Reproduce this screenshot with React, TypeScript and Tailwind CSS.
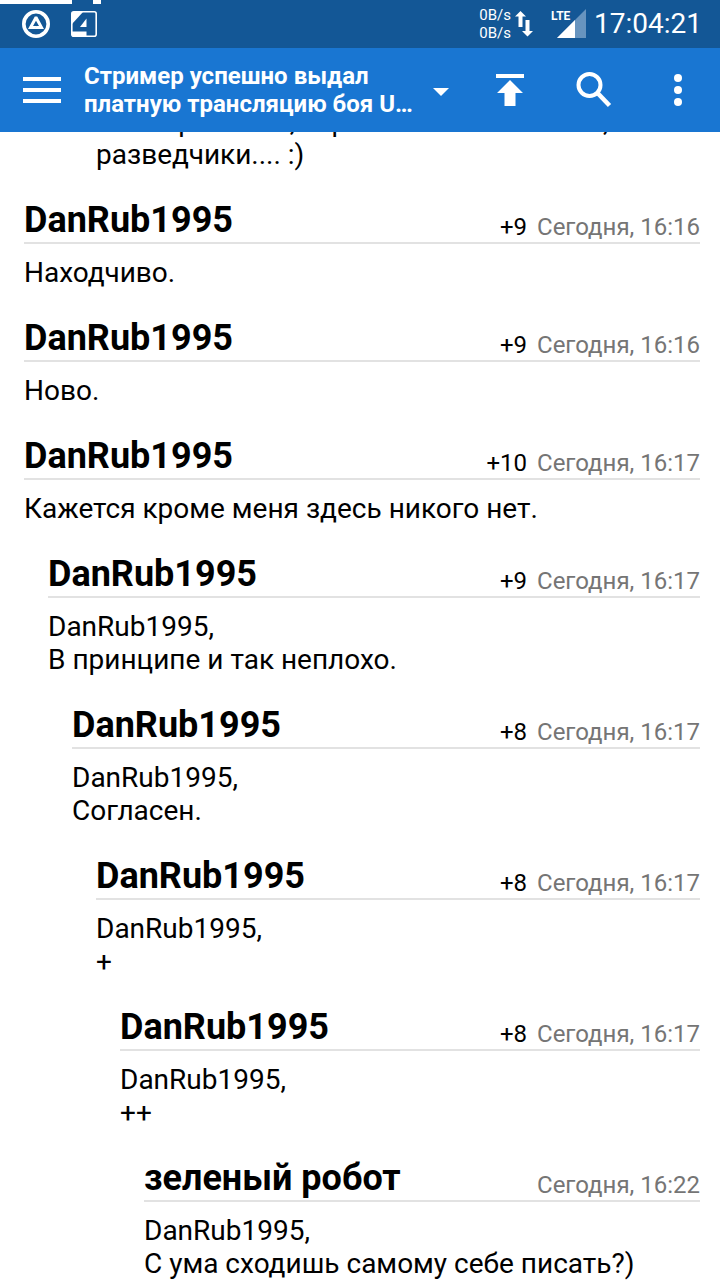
type Comment = {
  author: string;
  score?: string;
  time: string;
  lines: string[];
  indent: string;
};

const comments: Comment[] = [
  { author: "DanRub1995", score: "+9", time: "Сегодня, 16:16", lines: ["Находчиво."], indent: "ml-6" },
  { author: "DanRub1995", score: "+9", time: "Сегодня, 16:16", lines: ["Ново."], indent: "ml-6" },
  { author: "DanRub1995", score: "+10", time: "Сегодня, 16:17", lines: ["Кажется кроме меня здесь никого нет."], indent: "ml-6" },
  { author: "DanRub1995", score: "+9", time: "Сегодня, 16:17", lines: ["DanRub1995,", "В принципе и так неплохо."], indent: "ml-12" },
  { author: "DanRub1995", score: "+8", time: "Сегодня, 16:17", lines: ["DanRub1995,", "Согласен."], indent: "ml-18" },
  { author: "DanRub1995", score: "+8", time: "Сегодня, 16:17", lines: ["DanRub1995,", "+"], indent: "ml-24" },
  { author: "DanRub1995", score: "+8", time: "Сегодня, 16:17", lines: ["DanRub1995,", "++"], indent: "ml-30" },
  { author: "зеленый робот", time: "Сегодня, 16:22", lines: ["DanRub1995,", "С ума сходишь самому себе писать?)"], indent: "ml-36" },
];

function StatusBar() {
  return (
    <div className="relative flex h-12 items-center bg-[#135796] pl-[22px] pr-[18px] text-white">
      {/* edge of a heads-up notification sliding away */}
      <span className="absolute left-0 top-0 h-1 w-[72px] bg-white" />
      <span className="absolute left-[93px] top-0 h-1 w-2 bg-white" />

      <svg width="28" height="28" viewBox="0 0 28 28" fill="none" aria-hidden>
        <circle cx="14" cy="14" r="12.2" stroke="white" strokeWidth="3.6" />
        <path d="M12.8 6.500h2.400L22 19h-9.500l2.200-2.900h2.300L14 10.800l-3 5.300h3.600L12.500 19H6Z" fill="white" />
      </svg>
      <svg className="ml-[21px]" width="26" height="26" viewBox="0 0 26 26" fill="none" aria-hidden>
        <rect x="0.8" y="0.8" width="24.4" height="24.4" rx="2" stroke="white" strokeWidth="1.6" />
        <path d="M1 1h11L1 13Z" fill="white" />
        <path d="M15.500 7.500V16H9Z" fill="white" />
        <path d="M0.800 20.500H15.500v4.700H2.500L0.800 24Z" fill="white" />
      </svg>

      <div className="ml-auto flex items-center">
        <div className="text-[15px] leading-[18px]">
          <p>0B/s</p>
          <p>0B/s</p>
        </div>
        <svg className="ml-1" width="18" height="26" viewBox="0 0 18 26" fill="white" aria-hidden>
          <path d="M5.500 0 11 5.500H7.500V16H3.500V5.500H0Z" />
          <path d="M12.500 25.500 18 20H14.500V9h-4v11H7Z" />
        </svg>
        <div className="relative ml-[18px] h-[30px] w-[35px]">
          <svg className="ml-auto" width="30" height="30" viewBox="0 0 30 30" aria-hidden>
            <path d="M30 0V29H1Z" fill="#6794bf" />
            <path d="M19 11V29H1Z" fill="white" />
          </svg>
          <span className="absolute left-0 top-0 bg-[#135796] text-xs leading-[14px] font-bold">LTE</span>
        </div>
        <time className="ml-2 text-[28px] leading-8">17:04:21</time>
      </div>
    </div>
  );
}

function Toolbar() {
  return (
    <header className="flex h-[84px] items-center bg-[#1976d2] text-white">
      <button aria-label="Меню" className="flex h-full w-[84px] items-center pl-[23px]">
        <svg width="38" height="26" viewBox="0 0 38 26" fill="white" aria-hidden>
          <path d="M0 0h38v4H0zM0 11h38v4H0zM0 22h38v4H0z" />
        </svg>
      </button>
      <button className="flex h-full min-w-0 flex-1 items-center justify-between pr-[19px] text-left text-2xl leading-7 font-bold">
        <span className="whitespace-nowrap">
          Стример успешно выдал
          <br />
          платную трансляцию боя U…
        </span>
        <svg className="mt-1" width="16" height="8" viewBox="0 0 16 8" fill="white" aria-hidden>
          <path d="M0 0h16L8 8Z" />
        </svg>
      </button>
      <button aria-label="Наверх" className="flex h-full w-[84px] items-center justify-center">
        <svg width="28" height="32" viewBox="0 0 28 32" fill="white" aria-hidden>
          <path d="M0 0h28v4H0zM14 6 27 19H19.500V32H8.500V19H1Z" />
        </svg>
      </button>
      <button aria-label="Поиск" className="flex h-full w-[84px] items-center justify-center">
        <svg width="36" height="36" viewBox="0 0 36 36" fill="none" stroke="white" aria-hidden>
          <circle cx="13.500" cy="13" r="11" strokeWidth="4" />
          <path d="M22 21.500 33.500 33.500" strokeWidth="4.500" />
        </svg>
      </button>
      <button aria-label="Ещё" className="flex h-full w-[84px] items-center justify-center">
        <svg width="8" height="32" viewBox="0 0 8 32" fill="white" aria-hidden>
          <circle cx="4" cy="4" r="4" />
          <circle cx="4" cy="16" r="4" />
          <circle cx="4" cy="28" r="4" />
        </svg>
      </button>
    </header>
  );
}

function CommentItem({ comment }: { comment: Comment }) {
  return (
    <article className={`${comment.indent} mr-5 pt-7`}>
      <div className="flex items-end justify-between border-b-2 border-[#e2e2e2] pb-px">
        <h2 className="text-4xl leading-[42px] font-bold">{comment.author}</h2>
        <div className="flex gap-[10px] text-2xl leading-7">
          {comment.score ? <span>{comment.score}</span> : null}
          <time className="text-[#757575]">{comment.time}</time>
        </div>
      </div>
      <div className="mt-3 text-[28px] leading-[33px]">
        {comment.lines.map((line) => (
          <p key={line}>{line}</p>
        ))}
      </div>
    </article>
  );
}

export default function App() {
  return (
    <div className="flex h-dvh flex-col bg-white font-['Roboto',sans-serif] text-black">
      <StatusBar />
      <Toolbar />
      <main className="min-h-0 flex-1 overflow-hidden">
        {/* the list is scrolled a little way under the toolbar */}
        <div className="-mt-[27px]">
          <div className="ml-24 mr-5 text-[28px] leading-[33px]">
            <p>Но и проникли, серьезные такие наши,</p>
            <p>разведчики.... :)</p>
          </div>
          {comments.map((comment, i) => (
            <CommentItem key={i} comment={comment} />
          ))}
        </div>
      </main>
    </div>
  );
}
